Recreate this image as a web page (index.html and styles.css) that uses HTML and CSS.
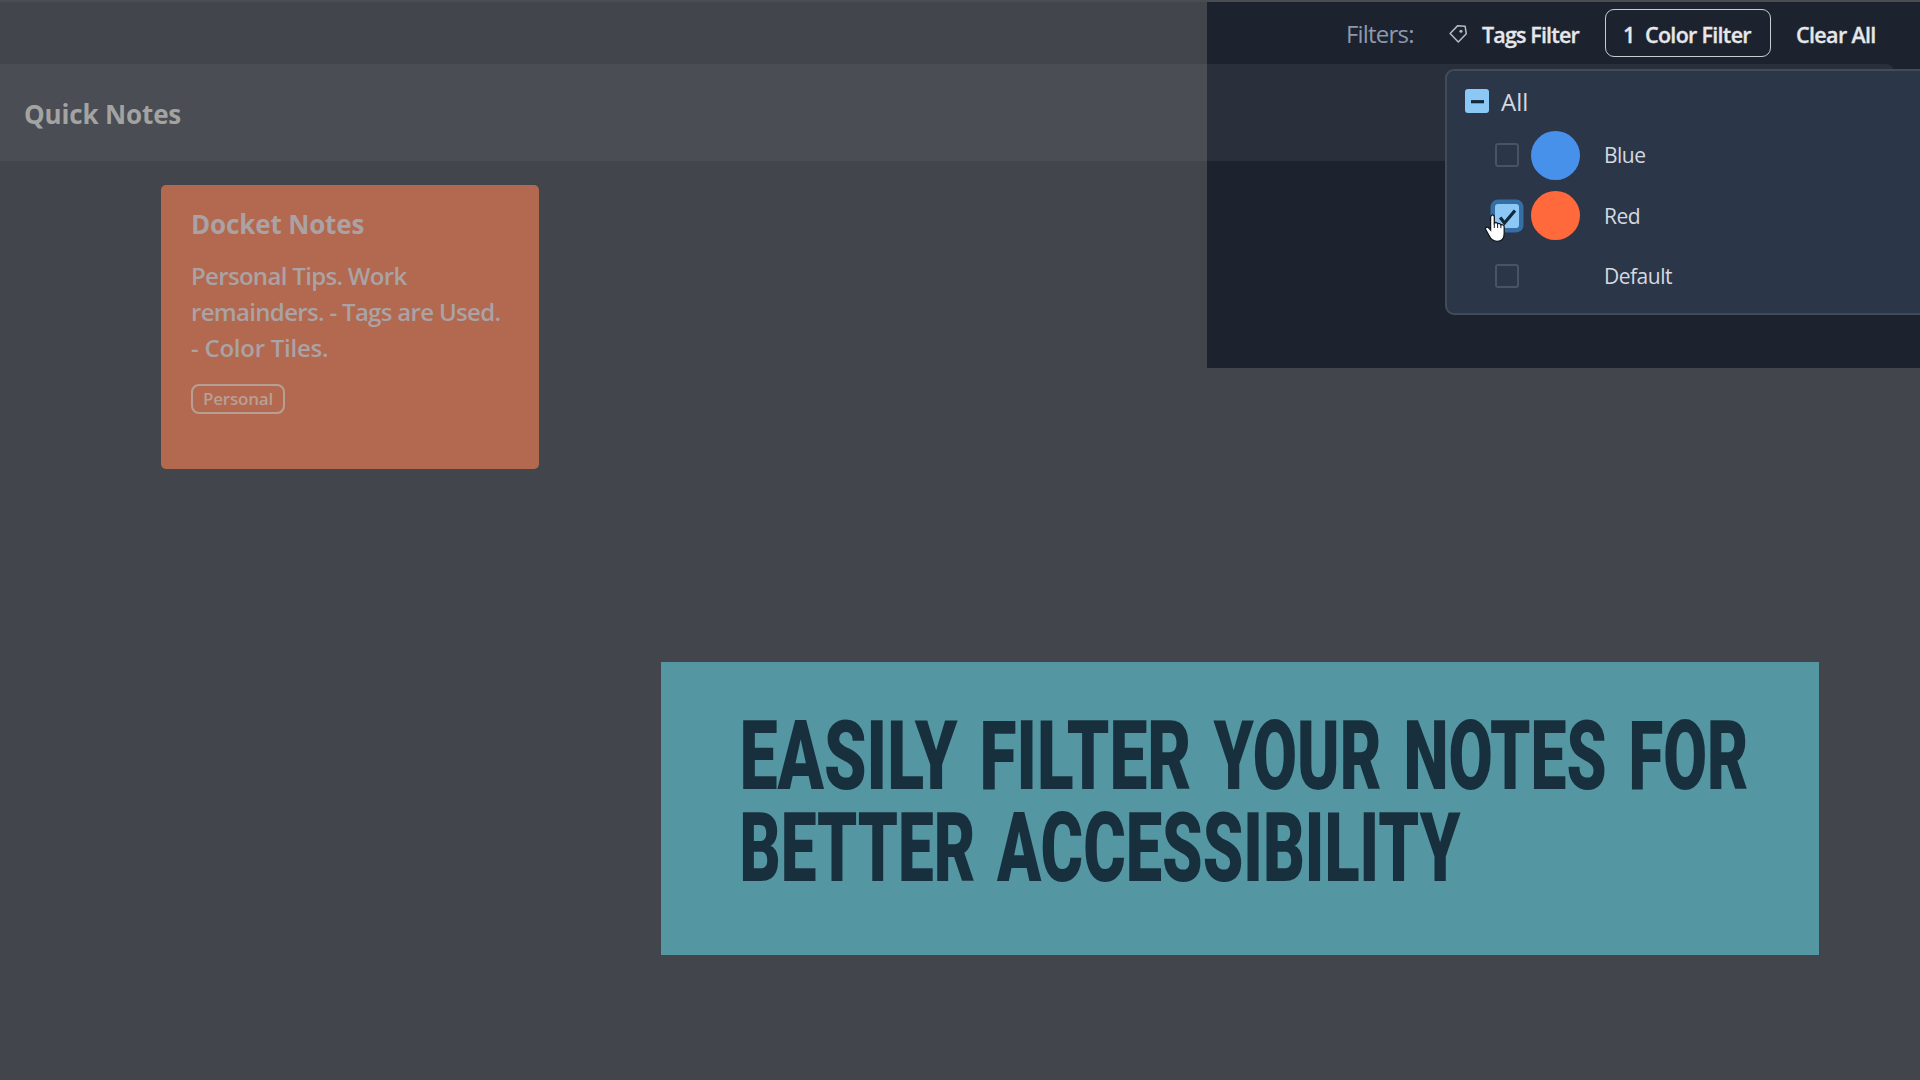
FILE: index.html
```html
<!DOCTYPE html>
<html lang="en">
<head>
<meta charset="utf-8">
<title>Docket Notes</title>
<link rel="stylesheet" href="styles.css">
</head>
<body>
<main class="stage">
  <header class="topbar"></header>
  <div class="heading"><h1 class="heading-title">Quick Notes</h1></div>
  <article class="note">
    <h2 class="note-title">Docket Notes</h2>
    <p class="note-text">Personal Tips. Work<br>remainders. - Tags are Used.<br><span class="note-last">- Color Tiles.</span></p>
    <span class="note-tag">Personal</span>
  </article>

  <section class="spotlight">
    <div class="filters">
      <span class="filters-label">Filters:</span>
      <button class="filter-btn filter-tags">
        <svg class="tag-icon" viewBox="0 0 20 20"><path d="M9.2 1.2 17 1.9 18.2 9.8 9.8 18.4 1.2 9.4Z"/><circle cx="12.6" cy="7" r="1.6"/></svg>
        <span>Tags Filter</span>
      </button>
      <button class="filter-btn filter-color"><span class="count">1</span><span>Color Filter</span></button>
      <button class="filter-btn filter-clear">Clear All</button>
    </div>
    <div class="heading-lit"></div>
    <div class="menu">
      <label class="menu-all"><span class="box box-on"><svg viewBox="0 0 24 24"><path d="M6 12.7H19"/></svg></span><span>All</span></label>
      <label class="menu-row"><span class="box"></span><span class="dot dot-blue"></span><span>Blue</span></label>
      <label class="menu-row"><span class="box box-on box-focus"><svg viewBox="0 0 24 24"><path d="M5.2 13.5 9.5 19 20 6.5"/></svg></span><span class="dot dot-red"></span><span>Red</span></label>
      <label class="menu-row"><span class="box"></span><span class="dot"></span><span>Default</span></label>
    </div>
  </section>

  <svg class="cursor" viewBox="0 0 22 30"><path d="M7.2 2.6C8.6 1.2 10.3 2.2 10.3 4V10.2C11.4 9 13.2 9.5 13.6 10.8 14.8 10 16.4 10.6 16.8 11.9 18.5 11.2 20.2 12.2 20.2 14V20.5C20.2 25.5 17.5 28.3 13 28.3 8.7 28.3 6.8 26.2 5.2 22.8L1.7 16.6C.8 14.6 3.2 13.3 4.6 14.8L6.6 17V4Z"/><path class="knuckles" d="M10.3 10.5V15M13.6 11V15M16.9 12V15.2"/></svg>

  <section class="banner">
    <svg class="banner-text" viewBox="0 0 1158 293">
      <g class="banner-words">
        <text x="78.5" y="127" textLength="218" lengthAdjust="spacingAndGlyphs">EASILY</text>
        <text x="318.5" y="127" textLength="212" lengthAdjust="spacingAndGlyphs">FILTER</text>
        <text x="552.5" y="127" textLength="168" lengthAdjust="spacingAndGlyphs">YOUR</text>
        <text x="742.5" y="127" textLength="203" lengthAdjust="spacingAndGlyphs">NOTES</text>
        <text x="967.5" y="127" textLength="120" lengthAdjust="spacingAndGlyphs">FOR</text>
        <text x="78.5" y="219" textLength="236" lengthAdjust="spacingAndGlyphs">BETTER</text>
        <text x="336" y="219" textLength="463.5" lengthAdjust="spacingAndGlyphs">ACCESSIBILITY</text>
      </g>
    </svg>
  </section>
</main>
</body>
</html>
```
FILE: styles.css
```css
* { box-sizing: border-box; }
body { margin: 0; background: #42454c; font-family: "Open Sans", "Noto Sans", sans-serif; }
.stage { position: relative; width: 1920px; height: 1080px; overflow: hidden; display: flex; flex-direction: column; }
.topbar { flex: none; height: 64px; border-top: 2px solid #4a4c51; }
.heading { flex: none; height: 97px; padding-left: 24px; display: flex; align-items: center; background: #4a4d53; }
.heading-title { margin: 2px 0 0; font-size: 26px; font-weight: 700; letter-spacing: -.15px; color: #a3a3a2; }
.note { flex: none; width: 378px; height: 284px; margin: 24px 0 0 161px; padding: 20px 30px; border-radius: 5px; background: #b3694f; color: #aaa2a4; }
.note-title { margin: 0; font-size: 26px; line-height: 38px; font-weight: 700; letter-spacing: -.15px; }
.note-text { margin: 15px 0 0; font-size: 24px; line-height: 36px; font-weight: 600; letter-spacing: -.68px; white-space: nowrap; }
.note-last { letter-spacing: -.25px; }
.note-tag { display: flex; align-items: center; justify-content: center; width: 94px; height: 30px; margin-top: 18px; padding-bottom: 1px; border: 2px solid #b89f93; border-radius: 8px; color: #b89f93; font-size: 17px; font-weight: 600; letter-spacing: -.2px; }

.spotlight { position: absolute; left: 1207px; top: 2px; width: 713px; height: 366px; overflow: hidden; background: #1d232e; }
.filters { display: flex; align-items: center; height: 62px; padding: 1px 0 0 139px; color: #e6e7ea; }
.filters-label { width: 103px; font-size: 24px; letter-spacing: -.8px; color: #8e98ad; }
.filter-btn { display: flex; align-items: center; height: 48px; padding: 1px 0 0; border: 0; background: none; color: inherit; font: 600 21.5px "Open Sans", "Noto Sans", sans-serif; letter-spacing: -.85px; white-space: nowrap; -webkit-text-stroke: .3px currentColor; }
.filter-tags { width: 156px; gap: 14px; }
.tag-icon { width: 19px; height: 20px; margin-top: -1px; fill: none; stroke: #b7babf; stroke-width: 1.6; stroke-linejoin: round; }
.tag-icon circle { fill: #b7babf; stroke: none; }
.filter-color { width: 166px; margin-top: -1px; padding: 2px 0 0 17px; border: 1.5px solid #c9ccd1; border-radius: 9px; letter-spacing: -.7px; }
.count { width: 22px; text-align: left; }
.filter-clear { margin-left: 25px; letter-spacing: -.65px; }
.heading-lit { width: 687px; height: 97px; background: #2a303b; border-top-right-radius: 8px; }

.menu { position: absolute; left: 238px; top: 67px; width: 500px; height: 246px; padding: 16px 17.5px; border: 2px solid #414c5b; border-radius: 9px; background: #2b3648; color: #d5d9e0; font-size: 21px; letter-spacing: -.5px; }
.menu-all { display: flex; align-items: center; gap: 12.5px; height: 28px; font-size: 24px; letter-spacing: 0; }
.menu-row { display: flex; align-items: center; height: 49px; margin-bottom: 11.5px; padding-left: 30px; }
.menu-all + .menu-row { margin-top: 15.6px; }
.box { flex: none; width: 24px; height: 24px; border: 2px solid #485363; border-radius: 3px; }
.box svg { display: block; width: 24px; height: 24px; fill: none; stroke: #14283c; stroke-width: 3.2; }
.box-on { border: 0; background: #8cc8f6; }
.box-focus { box-shadow: 0 0 0 4.5px #376da5; }
.dot { flex: none; width: 49px; height: 49px; margin: 0 24.5px 0 12px; border-radius: 50%; }
.dot-blue { background: #4791ea; }
.dot-red { background: #ff693c; }

.cursor { position: absolute; left: 1484px; top: 213px; width: 22px; height: 30px; fill: #fff; stroke: #15181f; stroke-width: 1.3; }
.cursor .knuckles { fill: none; stroke-width: 1; }

.banner { position: absolute; left: 661px; top: 662px; width: 1158px; height: 293px; background: #5496a2; }
.banner-text { display: block; width: 100%; height: 100%; }
.banner-words { font-family: Roboto, "Liberation Sans", sans-serif; font-size: 97px; font-weight: 900; fill: #18303d; }
```
